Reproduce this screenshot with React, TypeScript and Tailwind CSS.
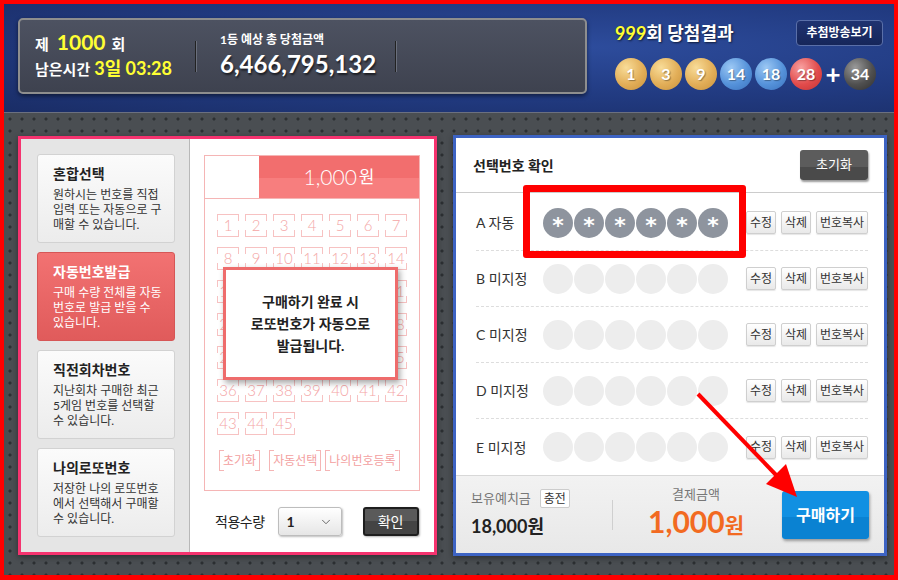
import React from "react";
import { ChevronDown } from "lucide-react";

const balls = [
  { n: 1, c: "bg-[radial-gradient(circle_at_35%_30%,#f8dc98,#e2ae58_55%,#c8923c)]" },
  { n: 3, c: "bg-[radial-gradient(circle_at_35%_30%,#f8dc98,#e2ae58_55%,#c8923c)]" },
  { n: 9, c: "bg-[radial-gradient(circle_at_35%_30%,#f8dc98,#e2ae58_55%,#c8923c)]" },
  { n: 14, c: "bg-[radial-gradient(circle_at_35%_30%,#9cc8f4,#5592da_55%,#3b72bd)]" },
  { n: 18, c: "bg-[radial-gradient(circle_at_35%_30%,#9cc8f4,#5592da_55%,#3b72bd)]" },
  { n: 28, c: "bg-[radial-gradient(circle_at_35%_30%,#f8a0a0,#e24c4c_55%,#c43232)]" },
];

const menus = [
  { title: "혼합선택", lines: ["원하시는 번호를 직접", "입력 또는 자동으로 구", "매할 수 있습니다."], active: false },
  { title: "자동번호발급", lines: ["구매 수량 전체를 자동", "번호로 발급 받을 수", "있습니다."], active: true },
  { title: "직전회차번호", lines: ["지난회차 구매한 최근", "5게임 번호를 선택할", "수 있습니다."], active: false },
  { title: "나의로또번호", lines: ["저장한 나의 로또번호", "에서 선택해서 구매할", "수 있습니다."], active: false },
];

const rows = [
  { label: "A 자동", filled: true },
  { label: "B 미지정", filled: false },
  { label: "C 미지정", filled: false },
  { label: "D 미지정", filled: false },
  { label: "E 미지정", filled: false },
];

function Header() {
  return (
    <div className="flex h-[109px] border-b border-[#6b7080] bg-[radial-gradient(ellipse_at_65%_40%,#2d4c9c_0%,#213a80_55%,#1a2d66_100%)] pl-[14px] pt-[14px]">
      <div className="flex h-[76px] w-[569px] items-center rounded-[5px] border-2 border-[#8e8e8e] bg-[linear-gradient(180deg,#4d5261,#3e424f)] shadow-[0_2px_4px_rgba(0,0,0,0.5)]">
        <div className="flex w-[175px] flex-col pl-[15px] text-white">
          <div className="flex items-baseline font-bold">
            <span className="text-[15px]">제</span>
            <span className="ml-[8px] text-[21px] leading-[24px] text-[#ffff33]">1000</span>
            <span className="ml-[6px] text-[15px]">회</span>
          </div>
          <div className="flex items-baseline font-bold">
            <span className="text-[15px]">남은시간</span>
            <span className="ml-[4px] text-[18px] text-[#ffff33]">3일 03:28</span>
          </div>
        </div>
        <div className="h-[31px] w-[2px] border-r border-[#6a6f7c] bg-[#222]" />
        <div className="flex w-[198px] flex-col pl-[23px] text-white">
          <span className="text-[12px] font-bold leading-[16px]">1등 예상 총 당첨금액</span>
          <span className="text-[24px] font-bold leading-[32px] [text-shadow:1px_2px_2px_rgba(0,0,0,0.6)]">6,466,795,132</span>
        </div>
        <div className="h-[31px] w-[2px] border-r border-[#6a6f7c] bg-[#222]" />
      </div>

      <div className="ml-[28px] flex w-[268px] flex-col pt-[2px]">
        <div className="flex h-[26px] items-center justify-between">
          <span className="text-[18px] font-bold text-white [text-shadow:1px_1px_2px_rgba(0,0,0,0.6)]">
            <span className="text-[#ffff33]">999</span>회 당첨결과
          </span>
          <button className="h-[26px] w-[87px] rounded-[4px] border border-[#5a6fa8] bg-[linear-gradient(#1f3270,#16265a)] text-[12px] font-bold text-white">
            추첨방송보기
          </button>
        </div>
        <div className="mt-[12px] flex items-center gap-[3px]">
          {balls.map((b) => (
            <div
              key={b.n}
              className={`flex h-[32px] w-[32px] items-center justify-center rounded-full text-[16px] font-bold text-white [text-shadow:1px_1px_1px_rgba(0,0,0,0.35)] ${b.c}`}
            >
              {b.n}
            </div>
          ))}
          <div className="flex w-[16px] justify-center text-[26px] font-bold leading-none text-white">+</div>
          <div className="flex h-[32px] w-[32px] items-center justify-center rounded-full bg-[radial-gradient(circle_at_35%_30%,#9a9a9a,#505050_55%,#2e2e2e)] text-[16px] font-bold text-white">
            34
          </div>
        </div>
      </div>
    </div>
  );
}

function NumBox({ n }: { n: number }) {
  return (
    <div className="flex h-[23px] w-[22px] items-center justify-center border-y border-[#f7c2c2] text-[15px] font-light text-[#f4a6a6] [background:linear-gradient(#f7c2c2_30%,transparent_30%,transparent_70%,#f7c2c2_70%)_left/1px_100%_no-repeat,linear-gradient(#f7c2c2_30%,transparent_30%,transparent_70%,#f7c2c2_70%)_right/1px_100%_no-repeat]">
      {n}
    </div>
  );
}

function Bracket({ label }: { label: string }) {
  return (
    <span className="flex h-[21px] items-center border-x border-[#f5b5b5] px-[3px] text-[12px] text-[#f3a0a0] [background:linear-gradient(to_right,#f5b5b5_4px,transparent_4px,transparent_calc(100%-4px),#f5b5b5_calc(100%-4px))_top/100%_1px_no-repeat,linear-gradient(to_right,#f5b5b5_4px,transparent_4px,transparent_calc(100%-4px),#f5b5b5_calc(100%-4px))_bottom/100%_1px_no-repeat]">
      {label}
    </span>
  );
}

function LeftPanel() {
  return (
    <div className="flex h-[419px] w-[419px] border-[3px] border-[#f5336f] bg-white shadow-[0_2px_6px_rgba(0,0,0,0.4)]">
      <div className="flex w-[169px] shrink-0 flex-col gap-[9px] border-r border-[#b8b8b8] bg-[#e5e5e5] pl-[16px] pt-[15px]">
        {menus.map((m) => (
          <div
            key={m.title}
            className={`flex h-[89px] w-[138px] flex-col rounded-[3px] border pl-[15px] pt-[9px] ${
              m.active
                ? "border-[#d65656] bg-[linear-gradient(#f27272,#e05b5b)] text-white"
                : "border-[#d2d2d2] bg-[linear-gradient(#fbfbfb,#ececec)] text-[#333]"
            }`}
          >
            <span className={`text-[14px] font-bold leading-[20px] ${m.active ? "text-white" : "text-[#222]"}`}>{m.title}</span>
            <div className="mt-[3px] text-[12px] leading-[15px]">
              {m.lines.map((l) => (
                <div key={l}>{l}</div>
              ))}
            </div>
          </div>
        ))}
      </div>

      <div className="flex min-w-0 flex-1 flex-col px-[14px] pt-[16px]">
        <div className="relative h-[336px] w-[216px] shrink-0 border border-[#f5b5b5]">
          <div className="flex h-[43px] border-b border-[#f5b5b5]">
            <div className="w-[54px] bg-white" />
            <div className="flex flex-1 items-center justify-center bg-[linear-gradient(#f26e6e_52%,#f77e7e_52%)] text-white">
              <span className="text-[21px] font-light">1,000</span>
              <span className="ml-[2px] text-[17px]">원</span>
            </div>
          </div>
          <div className="grid w-max grid-cols-7 gap-x-[6px] gap-y-[10px] pl-[12px] pt-[15px]">
            {Array.from({ length: 45 }, (_, i) => (
              <NumBox key={i} n={i + 1} />
            ))}
          </div>
          <div className="mt-[15px] flex pl-[14px]">
            <Bracket label="초기화" />
            <span className="ml-[9px]" />
            <Bracket label="자동선택" />
            <span className="ml-[4px]" />
            <Bracket label="나의번호등록" />
          </div>

          <div className="absolute left-[18px] top-[111px] flex h-[113px] w-[175px] items-center justify-center border-[3px] border-[#ee6c6c] bg-white shadow-[2px_3px_6px_rgba(0,0,0,0.35)]">
            <p className="text-center text-[14px] font-bold leading-[22px] text-[#222]">
              구매하기 완료 시<br />로또번호가 자동으로<br />발급됩니다.
            </p>
          </div>
        </div>

        <div className="mt-[16px] flex items-center">
          <span className="ml-[11px] shrink-0 whitespace-nowrap text-[14px] tracking-[-0.5px] text-[#222]">적용수량</span>
          <div className="ml-[13px] flex h-[29px] w-[64px] shrink-0 items-center justify-between rounded-[3px] border border-[#bdbdbd] bg-[linear-gradient(#ffffff,#e6e6e6)] pl-[8px] pr-[8px] shadow-[1px_1px_2px_rgba(0,0,0,0.25)]">
            <span className="text-[14px] font-bold text-[#222]">1</span>
            <ChevronDown size={14} strokeWidth={1.5} className="text-[#555]" />
          </div>
          <button className="ml-[21px] h-[29px] w-[56px] shrink-0 rounded-[3px] border-2 border-[#1e1e1e] bg-[linear-gradient(#5a5a5a_50%,#444_50%)] text-[14px] text-white shadow-[1px_1px_2px_rgba(0,0,0,0.3)]">
            확인
          </button>
        </div>
      </div>
    </div>
  );
}

function SmallBtn({ label, w }: { label: string; w: string }) {
  return (
    <button className={`h-[23px] ${w} rounded-[2px] border border-[#cfcfcf] bg-[linear-gradient(#ffffff,#e9e9e9)] text-[12px] text-[#333] shadow-[0_1px_1px_rgba(0,0,0,0.1)]`}>
      {label}
    </button>
  );
}

function RightPanel() {
  return (
    <div className="-mt-px flex h-[421px] w-[434px] shrink-0 flex-col border-[3px] border-[#3d63c3] bg-white shadow-[0_2px_6px_rgba(0,0,0,0.4)]">
      <div className="flex h-[55px] items-center justify-between border-b border-[#cccccc] pl-[17px] pr-[16px]">
        <span className="text-[14px] font-bold text-[#222]">선택번호 확인</span>
        <button className="h-[30px] w-[68px] rounded-[3px] bg-[linear-gradient(#5c5c5c_55%,#4a4a4a_55%)] text-[13px] text-white shadow-[1px_2px_2px_rgba(0,0,0,0.4)]">
          초기화
        </button>
      </div>

      <div className="flex flex-col pt-[2px]">
        {rows.map((r, i) => (
          <div
            key={r.label}
            className={`ml-[20px] mr-[16px] flex h-[56px] items-center ${i < rows.length - 1 ? "border-b border-dashed border-[#dddddd]" : ""}`}
          >
            <span className="w-[67px] text-[14px] text-[#333]">{r.label}</span>
            <div className="flex gap-[1px]">
              {Array.from({ length: 6 }, (_, k) => (
                <div
                  key={k}
                  className={`flex h-[30px] w-[30px] justify-center rounded-full font-bold text-white ${
                    r.filled ? "bg-[#8e949e]" : "bg-[#ededed]"
                  }`}
                >
                  {r.filled ? <span className="mt-[7px] font-['DejaVu_Sans',sans-serif] text-[22px] leading-none">*</span> : null}
                </div>
              ))}
            </div>
            <div className="ml-auto flex gap-[5px]">
              <SmallBtn label="수정" w="w-[30px]" />
              <SmallBtn label="삭제" w="w-[30px]" />
              <SmallBtn label="번호복사" w="w-[52px]" />
            </div>
          </div>
        ))}
      </div>

      <div className="flex flex-1 items-center border-t border-[#d8d8d8] bg-[linear-gradient(#f2f2f2,#e8e8e8)]">
        <div className="flex w-[156px] flex-col pl-[15px]">
          <div className="flex items-center">
            <span className="text-[13px] text-[#777]">보유예치금</span>
            <span className="ml-[9px] flex h-[19px] w-[30px] items-center justify-center rounded-[2px] border border-[#cccccc] bg-white text-[12px] text-[#333]">
              충전
            </span>
          </div>
          <span className="mt-[5px] text-[18px] font-bold text-[#222]">18,000원</span>
        </div>
        <div className="h-[30px] w-px bg-[#cfcfcf]" />
        <div className="flex w-[166px] flex-col items-center">
          <span className="text-[13px] text-[#777]">결제금액</span>
          <span className="font-bold leading-[34px] text-[#f26a21]">
            <span className="text-[30px]">1,000</span>
            <span className="text-[21px]">원</span>
          </span>
        </div>
        <button className="ml-auto mr-[15px] h-[48px] w-[87px] rounded-[3px] bg-[linear-gradient(#1190e2_55%,#0a82d2_55%)] text-[16px] font-bold text-white shadow-[1px_2px_3px_rgba(0,0,0,0.35)]">
          구매하기
        </button>
      </div>
    </div>
  );
}

export default function App() {
  return (
    <div className="relative h-[580px] w-[898px] overflow-hidden font-[Lato,'Noto_Sans_CJK_KR',sans-serif]">
      <div className="flex h-full w-full flex-col border-x-4 border-b-[5px] border-t-4 border-[#ff0000]">
        <Header />
        <div className="flex flex-1 items-start gap-[16px] bg-[#4a4e52] bg-[radial-gradient(circle,#2c2f32_1.3px,transparent_1.8px)] bg-[length:12px_12px] pl-[14px] pt-[23px]">
          <LeftPanel />
          <RightPanel />
        </div>
      </div>

      {/* annotation overlays */}
      <div className="absolute left-[523px] top-[185px] h-[73px] w-[223px] rounded-[3px] border-[7px] border-[#ff0000]" />
      <svg className="pointer-events-none absolute left-0 top-0" width="898" height="580">
        <line x1="698" y1="394" x2="778" y2="477" stroke="#ff0000" strokeWidth="4" />
        <polygon points="797,497 766,484 786,464" fill="#ff0000" />
      </svg>
    </div>
  );
}
